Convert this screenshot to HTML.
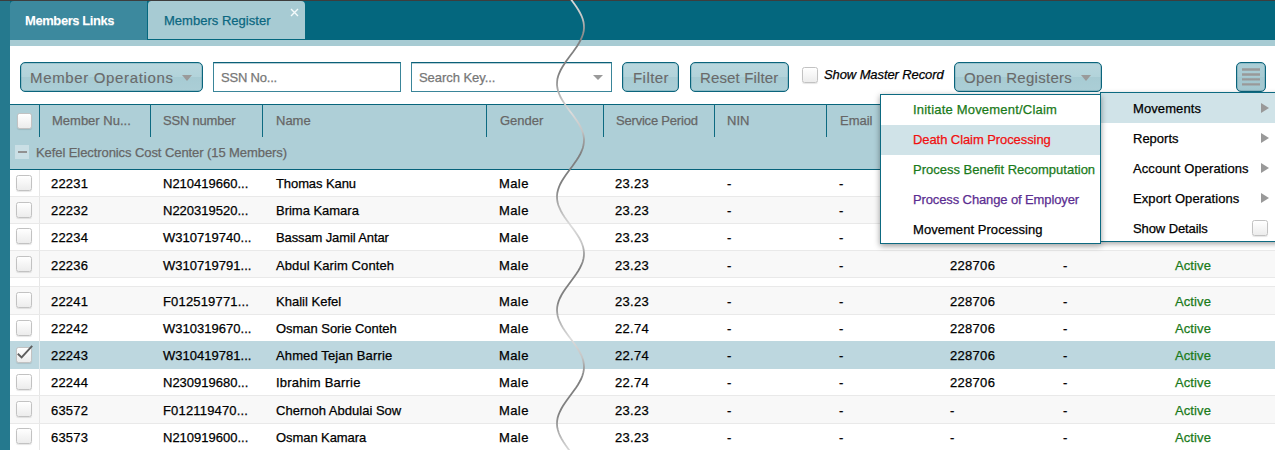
<!DOCTYPE html>
<html><head><meta charset="utf-8"><title>Members Register</title>
<style>
*{box-sizing:border-box;margin:0;padding:0}
html,body{width:1276px;height:450px;overflow:hidden;background:#fff}
body{font-family:"Liberation Sans",Arial,sans-serif;font-size:13px;color:#000;position:relative;-webkit-text-stroke:0.25px}
.abs{position:absolute}
#topline{left:0;top:0;width:1276px;height:1px;background:#3d3d3d}
#side{left:0;top:1px;width:10px;height:449px;background:#25798e}
#bar{left:10px;top:1px;width:1266px;height:39px;background:#04677e}
#strip{left:10px;top:40px;width:1266px;height:6px;background:#a7cbd3}
#tab1{left:10px;top:1px;width:137px;height:39px;background:#3c899e;border-radius:4px 0 0 0;color:#fff;font-weight:bold;line-height:40px;padding-left:15px;letter-spacing:-0.42px;text-shadow:0 1px 0 rgba(255,255,255,.3);-webkit-text-stroke:0}
#tab2{left:147px;top:1px;width:158px;height:39px;background:#a7cbd3;border-left:1px solid #04677e;border-bottom:1px solid #04677e;border-radius:4px 4px 0 0;color:#0b6780;line-height:40px;padding-left:16px;letter-spacing:0.02px}
#tabx{left:290px;top:8px;width:10px;height:10px}
.btn{position:absolute;top:62px;height:30px;border:1px solid #0a647c;border-radius:5px;box-shadow:inset 0 0 0 0.5px rgba(10,100,124,.35);background:linear-gradient(#b9d7de 0%,#b2d3da 49%,#a7cbd3 51%,#abced6 100%);color:#6a6a6a;font-size:15px;line-height:30px;white-space:nowrap;-webkit-text-stroke:0.1px}
.inp{position:absolute;top:62px;height:30px;border:1px solid #3a8599;border-top-color:#0b6078;box-shadow:inset 0 1px 0 rgba(11,96,120,.3);background:#fff;color:#777;line-height:30px;padding-left:7px;white-space:nowrap}
.tri{position:absolute;width:0;height:0;border-left:5px solid transparent;border-right:5px solid transparent;border-top:5px solid #9a9a9a}
.tri.b{border-top-width:6px}
.cb{position:absolute;width:15px;height:15px;border:1px solid #c2c2c2;border-radius:2.5px;background:linear-gradient(#ffffff,#ececec);box-shadow:0 1px 1px rgba(0,0,0,.1)}
#thead{left:10px;top:104px;width:1266px;height:66px;background:#aecfd7;border-top:1px solid #08657c;border-bottom:1px solid #06627a}
.hs{position:absolute;top:104px;width:1px;height:33px;background:#0d6a81}
.ht{position:absolute;top:104px;height:33px;line-height:33px;color:#666;white-space:nowrap}
.row{position:absolute;left:10px;width:1266px;background:#fff;white-space:nowrap}
.ln{position:absolute;left:10px;width:1266px;height:1px;background:#e9e9e9}
.row.alt{background:#f8f8f8}
.row.sel{background:#bdd7df}
.row .cb{width:16px;height:16px}
.row::before{content:"";position:absolute;left:29px;top:0;bottom:0;width:1px;background:#e6e6e6}
.row.sel::before{background:#dce9ed}
.rt{position:absolute;left:0;height:15px;line-height:15px}
.c{position:absolute;top:0}
.c1{left:41px;letter-spacing:0.2px}.c2{left:153px;letter-spacing:-0.08px}.c3{left:266px;letter-spacing:-0.15px}.c4{left:489px;letter-spacing:0.4px}.c5{left:605px;letter-spacing:0.3px}.c6{left:717px}.c7{left:829px}.c8{left:940px;letter-spacing:0.3px}.c10{left:1053px}.c9{left:1165px;color:#1a7a1a;letter-spacing:0.1px}
.menu{position:absolute;background:#fff;border:1px solid #0d6a81}
.mi{position:absolute;left:0;right:0;height:30px;line-height:29px;white-space:nowrap}
.m2 .mi{line-height:31px}
.mi.hl{background:#d0e3e8}
.arr{position:absolute;right:10px;top:10px;width:0;height:0;border-top:5px solid transparent;border-bottom:5px solid transparent;border-left:8px solid #999}
</style></head><body>
<div id="topline" class="abs"></div>
<div id="side" class="abs"></div>
<div id="bar" class="abs"></div>
<div id="strip" class="abs"></div>
<div id="tab1" class="abs">Members Links</div>
<div id="tab2" class="abs">Members Register</div>
<svg id="tabx" class="abs" viewBox="0 0 10 10"><path d="M1 1 L8 8 M8 1 L1 8" stroke="#f4fafb" stroke-width="1.4" fill="none"/></svg>

<div class="btn" style="left:20px;width:183px;padding-left:9px;letter-spacing:0.65px">Member Operations<span class="tri b" style="left:161px;top:12px"></span></div>
<div class="inp" style="left:213px;width:188px;letter-spacing:-0.2px">SSN No...</div>
<div class="inp" style="left:411px;width:201px;letter-spacing:-0.05px">Search Key...<span class="tri" style="left:181px;top:12px"></span></div>
<div class="btn" style="left:622px;width:57px;padding-left:10px;letter-spacing:0.45px">Filter</div>
<div class="btn" style="left:690px;width:99px;padding-left:9px;letter-spacing:0.15px">Reset Filter</div>
<span class="cb" style="left:801.5px;top:66.5px;width:16px;height:16px"></span>
<div class="abs" style="left:824px;top:67px;font-style:italic;line-height:16px;letter-spacing:-0.1px;white-space:nowrap">Show Master Record</div>
<div class="btn" style="left:954px;width:148px;padding-left:9px;letter-spacing:0.28px">Open Registers<span class="tri b" style="left:126px;top:12px"></span></div>
<div class="btn" style="left:1236px;width:30px;background:linear-gradient(#abced6 0%,#a8cbd3 49%,#a3c7cf 51%,#a5c9d1 100%)"><svg class="abs" style="left:5px;top:5px" width="18" height="18" viewBox="0 0 18 18"><path d="M0 1.5H18M0 6.5H18M0 11.4H18M0 16.4H18" stroke="#999" stroke-width="2.3"/></svg></div>

<div id="thead" class="abs"></div>
<span class="cb" style="left:16.5px;top:113px;width:15.5px;height:15.5px"></span>
<div class="hs" style="left:39px"></div><div class="hs" style="left:150px"></div><div class="hs" style="left:262px"></div><div class="hs" style="left:486px"></div><div class="hs" style="left:603px"></div><div class="hs" style="left:714px"></div><div class="hs" style="left:826px"></div>
<div class="ht" style="left:52px">Member Nu...</div>
<div class="ht" style="left:163px;letter-spacing:-0.2px">SSN number</div>
<div class="ht" style="left:276px">Name</div>
<div class="ht" style="left:500px">Gender</div>
<div class="ht" style="left:616px;letter-spacing:-0.2px">Service Period</div>
<div class="ht" style="left:727px">NIN</div>
<div class="ht" style="left:840px">Email</div>
<div class="abs" style="left:15px;top:145px;width:14px;height:14px;background:#cadfe5"><div class="abs" style="left:2.5px;top:6px;width:9px;height:2.4px;background:#919191"></div></div>
<div class="abs" style="left:36px;top:137px;height:32px;line-height:31px;color:#666;white-space:nowrap;letter-spacing:-0.08px">Kefel Electronics Cost Center (15 Members)</div>

<div class="row" style="top:170px;height:26px"><span class="cb" style="left:6px;top:4.5px"></span><div class="rt" style="top:6px"><span class="c c1">22231</span><span class="c c2" style="letter-spacing:0.0px">N210419660...</span><span class="c c3" style="letter-spacing:-0.09px">Thomas Kanu</span><span class="c c4">Male</span><span class="c c5">23.23</span><span class="c c6">-</span><span class="c c7">-</span><span class="c c8">-</span><span class="c c10">-</span></div></div>
<div class="row alt" style="top:196px;height:27px"><span class="cb" style="left:6px;top:5.5px"></span><div class="rt" style="top:7px"><span class="c c1">22232</span><span class="c c2" style="letter-spacing:0.0px">N220319520...</span><span class="c c3" style="letter-spacing:-0.02px">Brima Kamara</span><span class="c c4">Male</span><span class="c c5">23.23</span><span class="c c6">-</span><span class="c c7">-</span><span class="c c8">-</span><span class="c c10">-</span></div></div>
<div class="row" style="top:223px;height:27px"><span class="cb" style="left:6px;top:5px"></span><div class="rt" style="top:7px"><span class="c c1">22234</span><span class="c c2" style="letter-spacing:0.02px">W310719740...</span><span class="c c3" style="letter-spacing:-0.12px">Bassam Jamil Antar</span><span class="c c4">Male</span><span class="c c5">23.23</span><span class="c c6">-</span><span class="c c7">-</span><span class="c c8">-</span><span class="c c10">-</span></div></div>
<div class="row alt" style="top:250px;height:27px"><span class="cb" style="left:6px;top:5.5px"></span><div class="rt" style="top:8px"><span class="c c1">22236</span><span class="c c2" style="letter-spacing:0.02px">W310719791...</span><span class="c c3" style="letter-spacing:0.1px">Abdul Karim Conteh</span><span class="c c4">Male</span><span class="c c5">23.23</span><span class="c c6">-</span><span class="c c7">-</span><span class="c c8">228706</span><span class="c c10">-</span><span class="c c9">Active</span></div></div>
<div class="row alt" style="top:286px;height:28px"><span class="cb" style="left:6px;top:6px"></span><div class="rt" style="top:8px"><span class="c c1">22241</span><span class="c c2" style="letter-spacing:0.17px">F012519771...</span><span class="c c3" style="letter-spacing:0.02px">Khalil Kefel</span><span class="c c4">Male</span><span class="c c5">23.23</span><span class="c c6">-</span><span class="c c7">-</span><span class="c c8">228706</span><span class="c c10">-</span><span class="c c9">Active</span></div></div>
<div class="row" style="top:314px;height:27px"><span class="cb" style="left:6px;top:5.5px"></span><div class="rt" style="top:7px"><span class="c c1">22242</span><span class="c c2" style="letter-spacing:0.02px">W310319670...</span><span class="c c3" style="letter-spacing:-0.04px">Osman Sorie Conteh</span><span class="c c4">Male</span><span class="c c5">22.74</span><span class="c c6">-</span><span class="c c7">-</span><span class="c c8">228706</span><span class="c c10">-</span><span class="c c9">Active</span></div></div>
<div class="row alt sel" style="top:341px;height:28px"><span class="cb" style="left:6px;top:5.5px"></span><svg class="abs" style="left:5px;top:1.5px" width="20" height="20" viewBox="0 0 20 20"><path d="M2.8 10.8 L6.6 14.4 L17.2 2.8" fill="none" stroke="#5e5e5e" stroke-width="1.9"/></svg><div class="rt" style="top:7px"><span class="c c1">22243</span><span class="c c2" style="letter-spacing:0.02px">W310419781...</span><span class="c c3" style="letter-spacing:0.13px">Ahmed Tejan Barrie</span><span class="c c4">Male</span><span class="c c5">22.74</span><span class="c c6">-</span><span class="c c7">-</span><span class="c c8">228706</span><span class="c c10">-</span><span class="c c9">Active</span></div></div>
<div class="row" style="top:369px;height:26px"><span class="cb" style="left:6px;top:5px"></span><div class="rt" style="top:6px"><span class="c c1">22244</span><span class="c c2" style="letter-spacing:0.0px">N230919680...</span><span class="c c3" style="letter-spacing:0.21px">Ibrahim Barrie</span><span class="c c4">Male</span><span class="c c5">22.74</span><span class="c c6">-</span><span class="c c7">-</span><span class="c c8">228706</span><span class="c c10">-</span><span class="c c9">Active</span></div></div>
<div class="row alt" style="top:395px;height:28px"><span class="cb" style="left:6px;top:6px"></span><div class="rt" style="top:8px"><span class="c c1">63572</span><span class="c c2" style="letter-spacing:0.17px">F012119470...</span><span class="c c3" style="letter-spacing:0.01px">Chernoh Abdulai Sow</span><span class="c c4">Male</span><span class="c c5">23.23</span><span class="c c6">-</span><span class="c c7">-</span><span class="c c8">-</span><span class="c c10">-</span><span class="c c9">Active</span></div></div>
<div class="row" style="top:423px;height:27px"><span class="cb" style="left:6px;top:4.5px"></span><div class="rt" style="top:7px"><span class="c c1">63573</span><span class="c c2" style="letter-spacing:0.0px">N210919600...</span><span class="c c3" style="letter-spacing:-0.07px">Osman Kamara</span><span class="c c4">Male</span><span class="c c5">23.23</span><span class="c c6">-</span><span class="c c7">-</span><span class="c c8">-</span><span class="c c10">-</span><span class="c c9">Active</span></div></div>

<div class="abs" style="left:10px;top:277px;width:1266px;height:9px;background:#fff"><div class="abs" style="left:29px;top:0;width:1px;height:9px;background:#e6e6e6"></div></div>
<div class="ln" style="top:196px"></div><div class="ln" style="top:223px"></div><div class="ln" style="top:250px"></div><div class="ln" style="top:277px"></div><div class="ln" style="top:286px"></div><div class="ln" style="top:314px"></div><div class="ln" style="top:395px"></div><div class="ln" style="top:423px"></div>

<div class="menu m2" style="left:1100px;top:92px;width:180px;height:150px;box-shadow:0 2px 5px rgba(0,0,0,.35)">
 <div class="mi hl" style="top:0;padding-left:32px;letter-spacing:0.1px">Movements<span class="arr"></span></div>
 <div class="mi" style="top:30px;padding-left:32px">Reports<span class="arr"></span></div>
 <div class="mi" style="top:60px;padding-left:32px;letter-spacing:0.08px">Account Operations<span class="arr"></span></div>
 <div class="mi" style="top:90px;padding-left:32px;letter-spacing:0.1px">Export Operations<span class="arr"></span></div>
 <div class="mi" style="top:120px;padding-left:32px;letter-spacing:-0.1px">Show Details</div>
 <span class="cb" style="left:151px;top:127px;width:16px;height:16px"></span>
</div>
<div class="menu" style="left:880px;top:94px;width:221px;height:150px;box-shadow:0 2px 6px rgba(0,0,0,.4)">
 <div class="mi" style="top:0;padding-left:32px;color:#1a7a1a;letter-spacing:0.2px">Initiate Movement/Claim</div>
 <div class="mi hl" style="top:30px;padding-left:32px;color:#f01010;letter-spacing:-0.08px">Death Claim Processing</div>
 <div class="mi" style="top:60px;padding-left:32px;color:#1a7a1a">Process Benefit Recomputation</div>
 <div class="mi" style="top:90px;padding-left:32px;color:#5b2d91;letter-spacing:-0.12px">Process Change of Employer</div>
 <div class="mi" style="top:120px;padding-left:32px;height:28px;letter-spacing:0.05px">Movement Processing</div>
</div>

<svg class="abs" style="left:0;top:0" width="1276" height="450" viewBox="0 0 1276 450"><defs><linearGradient id="sg" x1="0" y1="27" x2="0" y2="140.3" gradientUnits="userSpaceOnUse" spreadMethod="repeat"><stop offset="0" stop-color="#a0a0a0"/><stop offset="0.12" stop-color="#808080"/><stop offset="0.42" stop-color="#808080"/><stop offset="0.55" stop-color="#a8a8a8"/><stop offset="0.75" stop-color="#dcdcdc"/><stop offset="0.92" stop-color="#c4c4c4"/><stop offset="1" stop-color="#a0a0a0"/></linearGradient></defs><path d="M570.0,-2 L572.2,1 L574.4,4 L576.5,7 L578.4,10 L580.1,13 L581.6,16 L582.7,19 L583.5,22 L583.9,25 L584.0,28 L583.7,31 L583.0,34 L582.0,37 L580.6,40 L579.0,43 L577.2,46 L575.1,49 L573.0,52 L570.7,55 L568.5,58 L566.3,61 L564.3,64 L562.4,67 L560.7,70 L559.3,73 L558.2,76 L557.4,79 L557.1,82 L557.0,85 L557.4,88 L558.1,91 L559.2,94 L560.5,97 L562.2,100 L564.1,103 L566.1,106 L568.3,109 L570.5,112 L572.8,115 L574.9,118 L577.0,121 L578.9,124 L580.5,127 L581.9,130 L582.9,133 L583.6,136 L584.0,139 L583.9,142 L583.5,145 L582.8,148 L581.7,151 L580.3,154 L578.6,157 L576.7,160 L574.6,163 L572.5,166 L570.2,169 L568.0,172 L565.8,175 L563.8,178 L561.9,181 L560.3,184 L559.0,187 L558.0,190 L557.3,193 L557.0,196 L557.1,199 L557.5,202 L558.3,205 L559.5,208 L560.9,211 L562.6,214 L564.5,217 L566.6,220 L568.8,223 L571.0,226 L573.3,229 L575.4,232 L577.4,235 L579.3,238 L580.8,241 L582.1,244 L583.1,247 L583.7,250 L584.0,253 L583.9,256 L583.4,259 L582.6,262 L581.4,265 L579.9,268 L578.2,271 L576.2,274 L574.1,277 L571.9,280 L569.7,283 L567.5,286 L565.3,289 L563.3,292 L561.5,295 L560.0,298 L558.7,301 L557.8,304 L557.2,307 L557.0,310 L557.2,313 L557.7,316 L558.6,319 L559.8,322 L561.3,325 L563.0,328 L565.0,331 L567.1,334 L569.3,337 L571.6,340 L573.8,343 L575.9,346 L577.9,349 L579.6,352 L581.2,355 L582.4,358 L583.3,361 L583.8,364 L584.0,367 L583.8,370 L583.2,373 L582.3,376 L581.1,379 L579.5,382 L577.8,385 L575.8,388 L573.6,391 L571.4,394 L569.2,397 L567.0,400 L564.9,403 L562.9,406 L561.2,409 L559.7,412 L558.5,415 L557.6,418 L557.1,421 L557.0,424 L557.2,427 L557.9,430 L558.8,433 L560.1,436 L561.7,439 L563.5,442 L565.5,445 L567.6,448 L569.8,451" fill="none" stroke="url(#sg)" stroke-width="1.8"/></svg>
<div class="abs" style="left:1275px;top:0;width:1px;height:450px;background:#fff"></div>
</body></html>
